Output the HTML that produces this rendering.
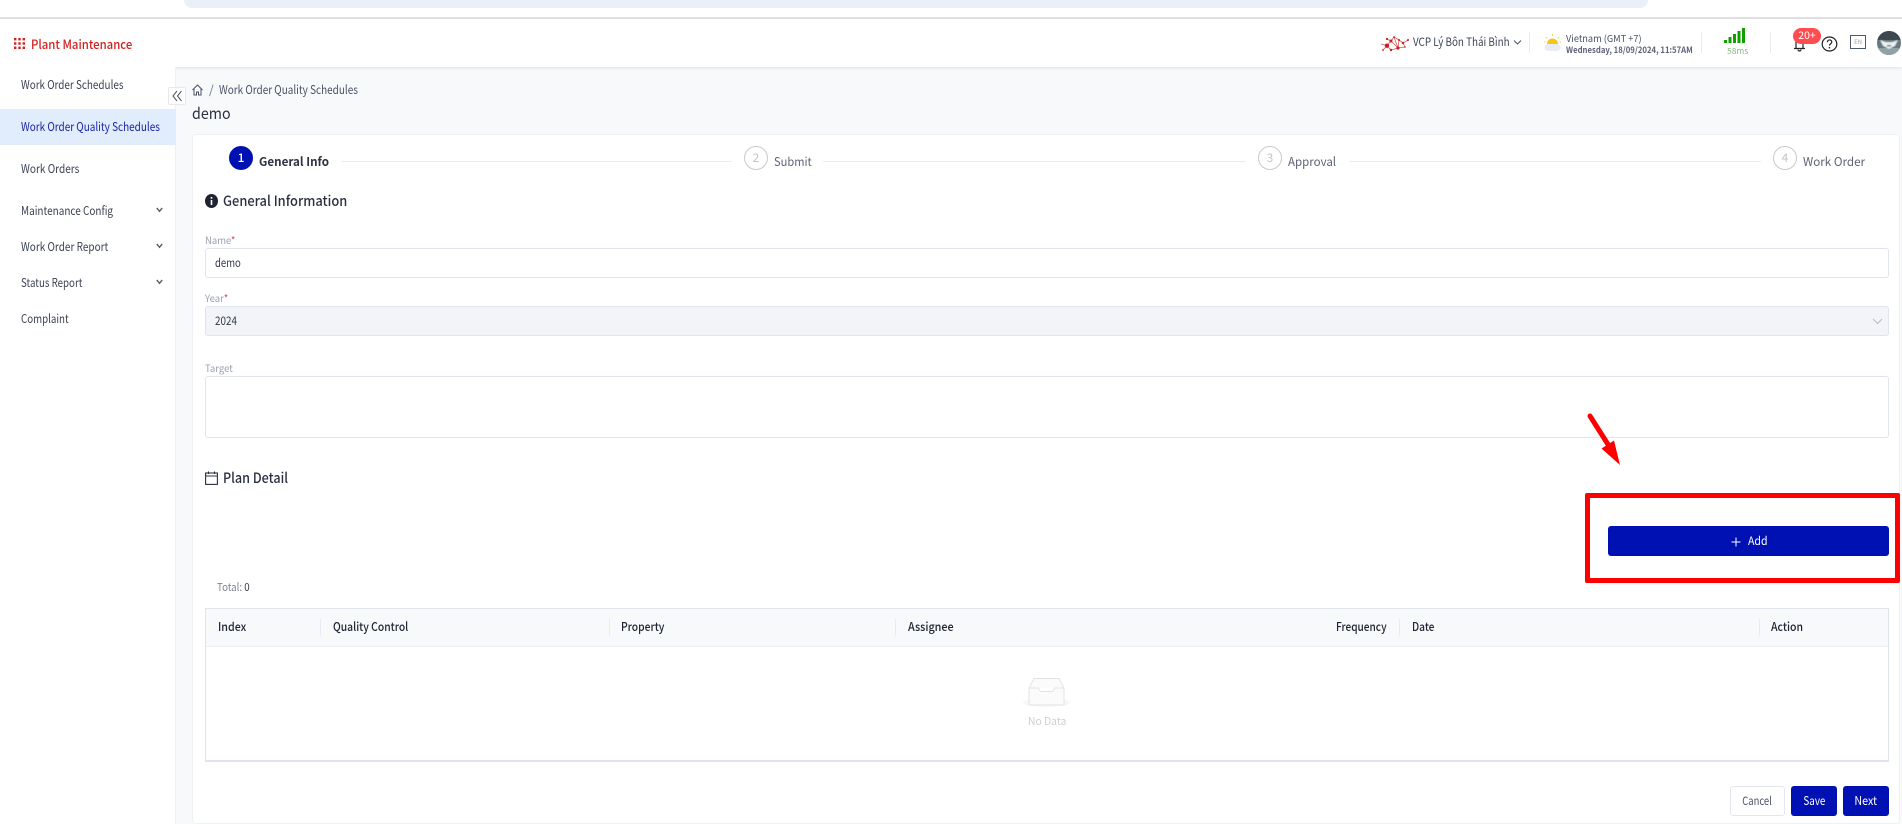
<!DOCTYPE html>
<html><head><meta charset="utf-8"><title>Plant Maintenance</title>
<style>
*{box-sizing:border-box}
html,body{margin:0;padding:0}
body{width:1902px;height:824px;overflow:hidden;background:#f8f9fb;position:relative;font-family:"Noto Sans CJK SC","Liberation Sans",sans-serif;color:#30384a}
.a{position:absolute}
.t{position:absolute;white-space:nowrap;line-height:20px;height:20px;font-size:12px;transform:scaleX(var(--s,1));transform-origin:0 50%}
.m{color:#3b4252}
.h{font-weight:500;color:#1f2433;font-size:12px}
.ic{border:1px solid #dfe4ee;border-radius:3px;background:#fff;left:205px;width:1684px}
.lb{font-size:10px;color:#98a0b3}
.lb i{font-style:normal;color:#e0455a}
.sep{position:absolute;top:619px;width:1px;height:17px;background:#e8eaef}
.c{position:absolute;top:146px;width:24px;height:24px;border:1px solid #c9c9c9;border-radius:50%;text-align:center;color:#c4c4c4;font-size:12px;line-height:22px}
.l{position:absolute;top:161px;height:1px;background:#ececee}
.btn{position:absolute;top:786px;height:30px;border-radius:3px;text-align:center;line-height:30px;font-size:12px;color:#fff;background:#0011b3}
.btn span{display:inline-block;transform:scaleX(var(--s,1))}
</style></head><body>
<div class="a" style="left:0;top:0;width:1902px;height:17px;background:#fff"></div>
<div class="a" style="left:184px;top:0;width:1464px;height:8px;background:#ebf0f8;border-radius:0 0 12px 12px"></div>
<div class="a" style="left:0;top:17px;width:1902px;height:2px;background:#e2e3e5"></div>
<div class="a" style="left:0;top:19px;width:1902px;height:48px;background:#fff;box-shadow:0 1px 3px rgba(40,50,80,.12)"></div>

<svg class="a" style="left:13px;top:37px" width="13" height="13" viewBox="0 0 13 13" fill="#d3201f"><rect x="1" y="1" width="2.4" height="2.4"/><rect x="5.3" y="1" width="2.4" height="2.4"/><rect x="9.6" y="1" width="2.4" height="2.4"/><rect x="1" y="5.3" width="2.4" height="2.4"/><rect x="5.3" y="5.3" width="2.4" height="2.4"/><rect x="9.6" y="5.3" width="2.4" height="2.4"/><rect x="1" y="9.6" width="2.4" height="2.4"/><rect x="5.3" y="9.6" width="2.4" height="2.4"/><rect x="9.6" y="9.6" width="2.4" height="2.4"/></svg>
<div class="t" style="left:31px;top:34px;font-size:12.5px;color:#d3201f;font-weight:500;--s:.91">Plant Maintenance</div>

<svg class="a" style="left:1380px;top:34px" width="30" height="19" viewBox="0 0 30 19" fill="none" stroke="#da5a5a" stroke-width=".8"><path d="M1 10L7 11.700L11 7L7 5M11 7L14 3L19 6L18 14L14 3M18 14L11 16L7 11.700L3 16M11 7L18 14L25 13L23 9L28 6M19 6L23 9"/><g fill="#c81e1e" stroke="none"><circle cx="7" cy="11.700" r="2.200"/><circle cx="11" cy="7" r="1.500"/><circle cx="7" cy="5" r="1.100"/><circle cx="14" cy="3" r=".9"/><circle cx="19" cy="6" r="1"/><circle cx="23" cy="9" r="1.200"/><circle cx="28" cy="6" r="1"/><circle cx="18" cy="14" r="1.600"/><circle cx="11" cy="16" r="1.200"/><circle cx="3" cy="16" r=".9"/><circle cx="25" cy="13" r=".8"/></g></svg>
<div class="t" style="left:1413px;top:32px;font-size:11.5px;color:#3b4458;--s:.855">VCP Lý Bôn Thái Bình</div>
<svg class="a" style="left:1513px;top:39px" width="9" height="7" viewBox="0 0 9 7" fill="none" stroke="#4a5264"><path d="M1 1.5L4.5 5L8 1.5"/></svg>
<div class="a" style="left:1529px;top:32px;width:1px;height:21px;background:#e8e9ec"></div>
<svg class="a" style="left:1543px;top:33px" width="19" height="19" viewBox="0 0 19 19"><path d="M4 11a5.500 5.500 0 0 1 11 0z" fill="#f5c518"/><path d="M9.500 1v2M3 4l1.300 1.300M16 4l-1.300 1.300M1 9h1.500M16.500 9H18" stroke="#f7d34a" stroke-width="1"/><rect x="1.500" y="11" width="16" height="7" rx="3.500" fill="#e8edf5"/></svg>
<div class="t" style="left:1566px;top:28px;font-size:9.5px;color:#4a5266;--s:.97">Vietnam (GMT +7)</div>
<div class="t" style="left:1566px;top:40px;font-size:8.5px;font-weight:700;color:#5c6379;--s:.91">Wednesday, 18/09/2024, 11:57AM</div>
<div class="a" style="left:1701px;top:32px;width:1px;height:21px;background:#e8e9ec"></div>
<svg class="a" style="left:1724px;top:28px" width="21" height="15" fill="#0fa000"><rect x="0" y="12" width="3" height="3"/><rect x="4.500" y="9" width="3" height="6"/><rect x="9" y="6" width="3" height="9"/><rect x="13.500" y="3" width="3" height="12"/><rect x="18" y="0" width="3" height="15"/></svg>
<div class="t" style="left:1727px;top:41px;font-size:8.500px;color:#86bd86">58ms</div>
<div class="a" style="left:1770px;top:32px;width:1px;height:21px;background:#e8e9ec"></div>
<svg class="a" style="left:1793px;top:36px" width="13" height="16" viewBox="0 0 13 16" fill="none" stroke="#222" stroke-width="1.200"><path d="M3 3v9M10 3v9M1 12.500h11M5 13.500a1.500 1.500 0 0 0 3 0"/></svg>
<div class="a" style="left:1793px;top:28px;width:28px;height:16px;border-radius:8px;background:#ff4d4f;color:#fff;font-size:10.500px;line-height:16px;text-align:center">20+</div>
<svg class="a" style="left:1821px;top:36px" width="17" height="16" viewBox="0 0 17 16" fill="none" stroke="#222"><ellipse cx="8.500" cy="8" rx="7.300" ry="7" stroke-width="1.200"/><path d="M6.300 6.200c0-3 4.500-3 4.500-.2 0 1.700-2.300 1.800-2.300 3.600" stroke-width="1.200"/><circle cx="8.500" cy="11.700" r=".8" fill="#222" stroke="none"/></svg>
<div class="a" style="left:1850px;top:35px;width:16px;height:14px;border:1px solid #4d5a6e;font-size:6px;line-height:12px;text-align:center;color:#9a9eb0">EN</div>
<svg class="a" style="left:1877px;top:31px" width="24" height="24" viewBox="0 0 24 24"><defs><clipPath id="av"><circle cx="12" cy="12" r="12"/></clipPath><filter id="bl"><feGaussianBlur stdDeviation=".6"/></filter></defs><g clip-path="url(#av)"><rect width="24" height="24" fill="#66797e"/><rect width="24" height="9" fill="#3d474d"/><rect y="17" width="24" height="7" fill="#8fa3a6"/><g filter="url(#bl)"><path d="M3 9L9 11H15L21 9L18 15L12 18L6 15Z" fill="#eceeef"/><path d="M10 14h4v1.500h-4z" fill="#6c767c"/></g></g></svg>

<!-- sidebar -->
<div class="a" style="left:0;top:67px;width:176px;height:757px;background:#fff;border-right:1px solid #eef0f4"></div>
<div class="a" style="left:0;top:109px;width:176px;height:36px;background:#e1edfd"></div>
<div class="t m" style="left:21px;top:75px;--s:.825">Work Order Schedules</div>
<div class="t" style="left:21px;top:117px;color:#1a24a8;--s:.83">Work Order Quality Schedules</div>
<div class="t m" style="left:21px;top:159px;--s:.84">Work Orders</div>
<div class="t m" style="left:21px;top:201px;--s:.83">Maintenance Config</div>
<div class="t m" style="left:21px;top:237px;--s:.834">Work Order Report</div>
<div class="t m" style="left:21px;top:273px;--s:.81">Status Report</div>
<div class="t m" style="left:21px;top:309px;--s:.81">Complaint</div>
<svg class="a" style="left:156px;top:207px" width="7" height="6" fill="none" stroke="#555c6b" stroke-width="1.400"><path d="M.8 1L3.500 4.300L6.200 1"/></svg>
<svg class="a" style="left:156px;top:243px" width="7" height="6" fill="none" stroke="#555c6b" stroke-width="1.400"><path d="M.8 1L3.500 4.300L6.200 1"/></svg>
<svg class="a" style="left:156px;top:279px" width="7" height="6" fill="none" stroke="#555c6b" stroke-width="1.400"><path d="M.8 1L3.500 4.300L6.200 1"/></svg>
<div class="a" style="left:168px;top:87px;width:18px;height:18px;background:#fff;border:1px solid #e6e8ee;border-radius:2px"></div>
<svg class="a" style="left:172px;top:90px" width="10" height="12" viewBox="0 0 10 12" fill="none" stroke="#3c4250" stroke-width="1"><path d="M5 1L1 6L5 11M9.500 1L5.500 6L9.500 11"/></svg>

<!-- breadcrumb -->
<svg class="a" style="left:192px;top:84px" width="11" height="12" viewBox="0 0 11 12" fill="none" stroke="#4a5266" stroke-width="1"><path d="M.5 6L5.500 1L10.500 6M2 5v6h2.500V8h2v3H9V5"/></svg>
<div class="t" style="left:209px;top:80px;color:#6a7284">/</div>
<div class="t" style="left:219px;top:80px;color:#4a5266;--s:.83">Work Order Quality Schedules</div>
<div class="t" style="left:192px;top:103px;font-size:15.500px;color:#2a3040;--s:.92">demo</div>

<!-- card -->
<div class="a" style="left:192px;top:134px;width:1708px;height:690px;background:#fff;border:1px solid #f0f1f5;border-radius:3px"></div>
<div class="c" style="left:229px;background:#0011b3;border-color:#0011b3;color:#fff;font-weight:500">1</div>
<div class="t" style="left:259px;top:152px;font-weight:700;color:#2c3342;--s:.97">General Info</div>
<div class="l" style="left:341px;width:391px"></div>
<div class="c" style="left:744px">2</div>
<div class="t" style="left:774px;top:152px;color:#5c6474;--s:.925">Submit</div>
<div class="l" style="left:823px;width:423px"></div>
<div class="c" style="left:1258px">3</div>
<div class="t" style="left:1288px;top:152px;color:#5c6474;--s:.96">Approval</div>
<div class="l" style="left:1349px;width:412px"></div>
<div class="c" style="left:1773px">4</div>
<div class="t" style="left:1803px;top:152px;color:#5c6474;--s:.97">Work Order</div>

<svg class="a" style="left:205px;top:194px" width="13" height="14" viewBox="0 0 13 14"><ellipse cx="6.500" cy="7" rx="6.500" ry="7" fill="#1f2530"/><rect x="5.700" y="6" width="1.600" height="5" fill="#fff"/><rect x="5.700" y="3" width="1.600" height="1.700" fill="#fff"/></svg>
<div class="t" style="left:223px;top:191px;font-size:14px;font-weight:500;color:#2a3040;--s:.92">General Information</div>

<div class="t lb" style="left:205px;top:230px;--s:.95">Name<i>*</i></div>
<div class="a ic" style="top:248px;height:30px"></div>
<div class="t" style="left:215px;top:253px;font-size:11.500px;--s:.83">demo</div>
<div class="t lb" style="left:205px;top:288px;--s:.95">Year<i>*</i></div>
<div class="a ic" style="top:306px;height:30px;background:#f2f4f8"></div>
<div class="t" style="left:215px;top:311px;font-size:11.500px;--s:.86">2024</div>
<svg class="a" style="left:1872px;top:318px" width="11" height="7" fill="none" stroke="#b5bbc7"><path d="M1 1l4.500 4.500L10 1"/></svg>
<div class="t lb" style="left:205px;top:358px;--s:.95">Target</div>
<div class="a ic" style="top:376px;height:62px"></div>

<svg class="a" style="left:205px;top:471px" width="13" height="14" viewBox="0 0 13 14" fill="none" stroke="#2a3040" stroke-width="1.100"><rect x=".6" y="2" width="11.800" height="11.400"/><path d="M.6 5h11.800M3.500 .5v2.500M9.500 .5v2.500"/></svg>
<div class="t" style="left:223px;top:468px;font-size:14px;font-weight:500;color:#2a3040;--s:.9">Plan Detail</div>

<!-- annotation -->
<svg class="a" style="left:1580px;top:410px" width="50" height="60" viewBox="0 0 50 60"><path d="M10 6L29 36" stroke="#f00" stroke-width="5" stroke-linecap="round"/><path d="M21.500 38.500L34 30.500L40 55Z" fill="#f00"/></svg>
<div class="a" style="left:1585px;top:493px;width:315px;height:90px;border:5px solid #f00;border-radius:2px"></div>
<div class="a" style="left:1608px;top:526px;width:281px;height:30px;background:#0011b3;border-radius:3px"></div>
<svg class="a" style="left:1731px;top:537px" width="10" height="10" fill="none" stroke="#fff" stroke-width="1"><path d="M5 .5v9M.5 5h9"/></svg>
<div class="t" style="left:1748px;top:531px;color:#fff;font-size:11.500px;--s:.92">Add</div>

<div class="t" style="left:217px;top:577px;font-size:11px;color:#7d8494;--s:.88">Total: <span style="color:#2f3645">0</span></div>

<!-- table -->
<div class="a" style="left:205px;top:608px;width:1684px;height:154px;border:1px solid #dfe3ea;border-bottom-width:2px;background:#fff"></div>
<div class="a" style="left:206px;top:609px;width:1682px;height:38px;background:#f8f9fb;border-bottom:1px solid #eceef2"></div>
<div class="sep" style="left:320px"></div><div class="sep" style="left:609px"></div><div class="sep" style="left:895px"></div><div class="sep" style="left:1399px"></div><div class="sep" style="left:1759px"></div>
<div class="t h" style="left:218px;top:617px;--s:.89">Index</div>
<div class="t h" style="left:333px;top:617px;--s:.86">Quality Control</div>
<div class="t h" style="left:621px;top:617px;--s:.86">Property</div>
<div class="t h" style="left:908px;top:617px;--s:.9">Assignee</div>
<div class="t h" style="left:1336px;top:617px;--s:.84">Frequency</div>
<div class="t h" style="left:1412px;top:617px;--s:.85">Date</div>
<div class="t h" style="left:1771px;top:617px;--s:.875">Action</div>

<svg class="a" style="left:1023px;top:677px" width="48" height="32" viewBox="0 0 48 32"><ellipse cx="23.500" cy="25.500" rx="23.500" ry="4.500" fill="#f7f7f7"/><path d="M11 1.500h25l5 9.500v17H6V11z" fill="#fbfbfb" stroke="#e3e3e3"/><path d="M6 11h9c1 0 1.500 3.500 3.500 3.500h10c2 0 2.500-3.500 3.500-3.500h9" fill="#fff" stroke="#e3e3e3"/></svg>
<div class="t" style="left:1028px;top:711px;font-size:11px;color:#cfcfcf;--s:.94">No Data</div>

<div class="btn" style="left:1730px;width:55px;background:#fff;border:1px solid #e3e6f0;color:#4a5266;line-height:28px;font-size:11.500px;--s:.82"><span>Cancel</span></div>
<div class="btn" style="left:1791px;width:46px;--s:.82"><span>Save</span></div>
<div class="btn" style="left:1843px;width:46px;--s:.89"><span>Next</span></div>
</body></html>
